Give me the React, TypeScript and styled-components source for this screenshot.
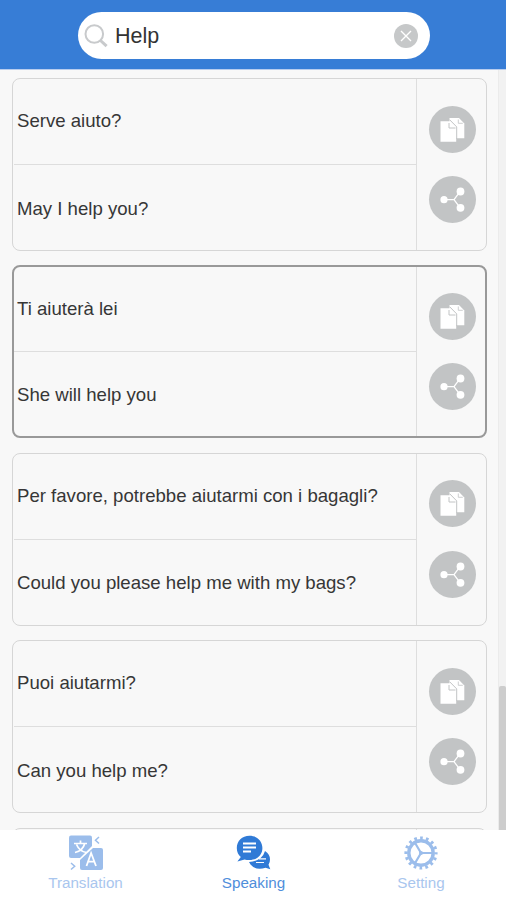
import React from "react";
import styled, { createGlobalStyle } from "styled-components";

const GlobalStyle = createGlobalStyle`
  * { box-sizing: border-box; }
  body { margin: 0; background: #f8f8f8; font-family: "Liberation Sans", Arial, sans-serif; }
`;

const Screen = styled.main`
  display: flex;
  flex-direction: column;
  width: 506px;
  height: 900px;
  overflow: hidden;
  background: #f8f8f8;
`;

const Header = styled.header`
  flex: none;
  height: 70px;
  padding: 12px 0 0 78px;
  background: #377dd6;
  border-bottom: 1px solid #b9cdee;
`;

const SearchBox = styled.label`
  display: flex;
  align-items: center;
  width: 352px;
  height: 47px;
  padding: 0 12px 0 6px;
  border-radius: 24px;
  background: #fff;
`;

const SearchText = styled.span`
  flex: 1;
  padding-left: 7px;
  font-size: 21.5px;
  line-height: 26px;
  color: #333;
`;

const Body = styled.section`
  display: flex;
  flex: none;
  height: 760px;
  overflow: hidden;
`;

const List = styled.div`
  display: flex;
  flex: 1;
  flex-direction: column;
  gap: 14.4px;
  padding: 8px 11px 0 12px;
`;

const Card = styled.article<{ $active?: boolean }>`
  display: flex;
  flex: none;
  height: 173px;
  border: ${(p) => (p.$active ? "2px solid #999" : "1px solid #d6d6d6")};
  border-radius: 8px;
`;

const Phrases = styled.div<{ $active?: boolean }>`
  display: grid;
  grid-template-rows: ${(p) => (p.$active ? "84px 1fr" : "85px 1fr")};
  width: ${(p) => (p.$active ? 402 : 403)}px;
  padding-left: ${(p) => (p.$active ? 0 : 1)}px;
`;

const Phrase = styled.p`
  display: flex;
  align-items: center;
  margin: 0;
  padding: 0 0 1px 3px;
  font-size: 18.6px;
  white-space: nowrap;
  color: #363636;

  & + & { padding: 2px 0 0 3px; border-top: 1px solid #dedede; }
`;

const Actions = styled.div<{ $active?: boolean }>`
  display: flex;
  flex: 1;
  flex-direction: column;
  align-items: flex-start;
  gap: 23.5px;
  padding: ${(p) => (p.$active ? 25.5 : 26.5)}px 0 0 11.5px;
  border-left: 1px solid #dedede;
`;

const RoundButton = styled.button`
  display: block;
  width: 47px;
  height: 47px;
  padding: 0;
  border: 0;
  border-radius: 50%;
  background: #c2c4c5;
`;

const ScrollTrack = styled.div`
  display: flex;
  align-items: flex-end;
  width: 8px;
  background: #f2f2f2;
  border-left: 1px solid #ebebeb;
`;

const ScrollThumb = styled.div`
  width: 7px;
  height: 144px;
  border-radius: 2px 2px 0 0;
  background: #cdcdcd;
`;

const TabBar = styled.nav`
  display: grid;
  flex: none;
  grid-template-columns: 171px 165px 170px;
  height: 70px;
  background: #fff;
`;

const Tab = styled.a<{ $active?: boolean }>`
  display: flex;
  flex-direction: column;
  align-items: center;
  padding-top: 5px;
  font-size: 15.2px;
  line-height: 18px;
  color: ${(p) => (p.$active ? "#4f8edb" : "#a9c6ee")};

  svg { display: block; margin-bottom: 3px; color: ${(p) => (p.$active ? "#307ad6" : "#9bbdeb")}; }
`;

const SearchIcon = () => (
  <svg width="24" height="25" viewBox="0 0 24 25" fill="none" stroke="#c8cacc">
    <circle cx="10.3" cy="11" r="8.8" strokeWidth="2" />
    <path d="M16.5 17.5 22.6 23.2" strokeWidth="3" />
  </svg>
);

const ClearIcon = () => (
  <svg width="24" height="24" viewBox="0 0 24 24">
    <circle cx="12" cy="12" r="12" fill="#c6c8c9" />
    <path d="m7 7 10 10M17 7 7 17" stroke="#fff" strokeWidth="1.4" />
  </svg>
);

const CopyIcon = () => (
  <svg width="47" height="47" viewBox="0 0 47 47">
    <path d="M20.5 12H30l5.3 5.5v14.8H20.5z" fill="#fff" />
    <path d="M29.3 13.5v3.8h4.5" fill="none" stroke="#c2c4c5" strokeWidth="0.8" />
    <path d="M11.5 15.2h9.8l5.9 6V35.7H11.5z" fill="#fff" />
    <path d="M20 17v5h6.5" fill="none" stroke="#c2c4c5" strokeWidth="1" />
    <path d="m20.7 13.8 7 7.1V33" fill="none" stroke="#c2c4c5" strokeWidth="1" />
  </svg>
);

const ShareIcon = () => (
  <svg width="47" height="47" viewBox="0 0 47 47" fill="#fff">
    <path d="M15 23.7h10l6-8M25 23.7l6 8" fill="none" stroke="#fff" strokeWidth="1.3" />
    <circle cx="15" cy="23.7" r="3.6" />
    <circle cx="31.5" cy="15.5" r="3.9" />
    <circle cx="31.5" cy="31.8" r="3.9" />
  </svg>
);

const TranslateIcon = () => (
  <svg width="36" height="36" viewBox="0 0 36 36">
    <path d="M3 .5h19q2 0 2 2V11L12 23H3q-2 0-2-2V2.5q0-2 2-2z" fill="currentColor" />
    <path d="M25 13h8q2 0 2 2v18q0 2-2 2H14q-2 0-2-2v-8z" fill="currentColor" />
    <path d="M6 8.5h13M12.5 5.5v3M7 17.5q8-2 9.5-8.5M8.5 9.5q3 7 10 8" fill="none" stroke="#fff" strokeWidth="1.7" />
    <path d="m18.5 31 4.6-13 4.9 13M20.2 26.7h6.2" fill="none" stroke="#fff" strokeWidth="1.8" />
    <path d="m31 2-3.5 3.3L31 8.5M3 28l3.7 3.2L3 34.5" fill="none" stroke="currentColor" strokeWidth="1.5" />
  </svg>
);

const ChatIcon = () => (
  <svg width="36" height="36" viewBox="0 0 36 36">
    <path d="M29 16q5 3 5 8.5 0 3-1.5 5.3l1.8 4.5-4.7-1.5Q20 36 14.5 29.5L13 27q13-1 16-11z" fill="currentColor" />
    <path d="M20 27.5h8M23 23.8h7" stroke="#fff" strokeWidth="1.2" />
    <path d="M13.5.8C6 .8.8 6.2.8 13c0 4 1.5 6.8 4 9L1.4 26.5l7.2-2.1q1.8.7 4.9.7C21 25.1 26.4 20 26.4 13S21 .8 13.5.8z" fill="currentColor" />
    <path d="M7 8.5h13M7 12.5h13M7 16.5h8" stroke="#fff" strokeWidth="1.8" />
  </svg>
);

const GearIcon = () => (
  <svg width="36" height="36" viewBox="0 0 36 36" fill="none" stroke="currentColor">
    <circle cx="18" cy="18" r="12.2" strokeWidth="3.4" />
    <circle cx="18" cy="18" r="15" strokeWidth="3.2" strokeDasharray="2.7 3.19" strokeDashoffset="1.35" />
    <path d="M17.5 18H30M18 18 11.8 7.5M18 18 11.8 28.5" strokeWidth="2.2" />
    <circle cx="18" cy="18" r="1" strokeWidth="2" />
  </svg>
);

const phrases = [
  { source: "Serve aiuto?", target: "May I help you?" },
  { source: "Ti aiuterà lei", target: "She will help you", active: true },
  { source: "Per favore, potrebbe aiutarmi con i bagagli?", target: "Could you please help me with my bags?" },
  { source: "Puoi aiutarmi?", target: "Can you help me?" },
  { source: "", target: "" },
];

export default function App() {
  return (
    <Screen>
      <GlobalStyle />
      <Header>
        <SearchBox>
          <SearchIcon />
          <SearchText>Help</SearchText>
          <ClearIcon />
        </SearchBox>
      </Header>
      <Body>
        <List>
          {phrases.map(({ source, target, active }, i) => (
            <Card key={i} $active={active}>
              <Phrases $active={active}>
                <Phrase>{source}</Phrase>
                <Phrase>{target}</Phrase>
              </Phrases>
              <Actions $active={active}>
                <RoundButton aria-label="Copy"><CopyIcon /></RoundButton>
                <RoundButton aria-label="Share"><ShareIcon /></RoundButton>
              </Actions>
            </Card>
          ))}
        </List>
        <ScrollTrack><ScrollThumb /></ScrollTrack>
      </Body>
      <TabBar>
        <Tab><TranslateIcon />Translation</Tab>
        <Tab $active><ChatIcon />Speaking</Tab>
        <Tab><GearIcon />Setting</Tab>
      </TabBar>
    </Screen>
  );
}
